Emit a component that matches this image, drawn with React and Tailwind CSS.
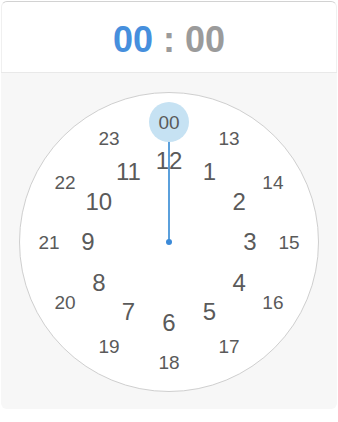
import React from "react";

const CX = 150;
const CY = 150;

function pos(i, r) {
  const a = (i * 30 * Math.PI) / 180;
  return { left: CX + r * Math.sin(a), top: CY - r * Math.cos(a) };
}

export default function App() {
  const inner = Array.from({ length: 12 }, (_, i) => i + 1);
  const outer = Array.from({ length: 12 }, (_, i) => i + 1);

  return (
    <div className="ml-px mt-px w-[336px] font-['Liberation_Sans',Arial,sans-serif]">
      {/* Time display */}
      <div className="h-[71px] border border-b-0 border-t-[#d2d2d2] border-x-[#f0f0f0] rounded-t-[6px] bg-white pt-[20px] flex justify-center">
        <div className="text-[36px] leading-none font-bold whitespace-pre">
          <span className="text-[#468fdd]">00</span>
          <span className="text-[#9b9b9b]"> : 00</span>
        </div>
      </div>

      {/* Clock face */}
      <div className="border-t border-[#e9e9e9] bg-[#f7f7f7] rounded-b-[6px] pt-[19px] pb-[17px] flex justify-center">
        <div className="relative w-[300px] h-[300px] rounded-full bg-white border border-[#cfcfcf]">
          <svg className="absolute -left-px -top-px" width="300" height="300">
            <line x1={CX} y1={CY} x2={CX} y2={30} stroke="#5ba0dc" strokeWidth="2" />
            <circle cx={CX} cy={30} r="20" fill="#c6e2f3" />
            <circle cx={CX} cy={CY} r="3" fill="#3b8ad8" />
          </svg>
          {outer.map((h) => {
            const p = pos(h, 120);
            const label = h === 12 ? "00" : String(h + 12);
            return (
              <span
                key={"o" + h}
                className="absolute -translate-x-1/2 -translate-y-1/2 text-[19px] leading-none text-[#5a5a5a] -ml-px -mt-px"
                style={{ left: p.left, top: p.top }}
              >
                {label}
              </span>
            );
          })}
          {inner.map((h) => {
            const p = pos(h, 81);
            return (
              <span
                key={"i" + h}
                className="absolute -translate-x-1/2 -translate-y-1/2 text-[24px] leading-none text-[#5a5a5a] -ml-px -mt-px"
                style={{ left: p.left, top: p.top }}
              >
                {h}
              </span>
            );
          })}
        </div>
      </div>
    </div>
  );
}
